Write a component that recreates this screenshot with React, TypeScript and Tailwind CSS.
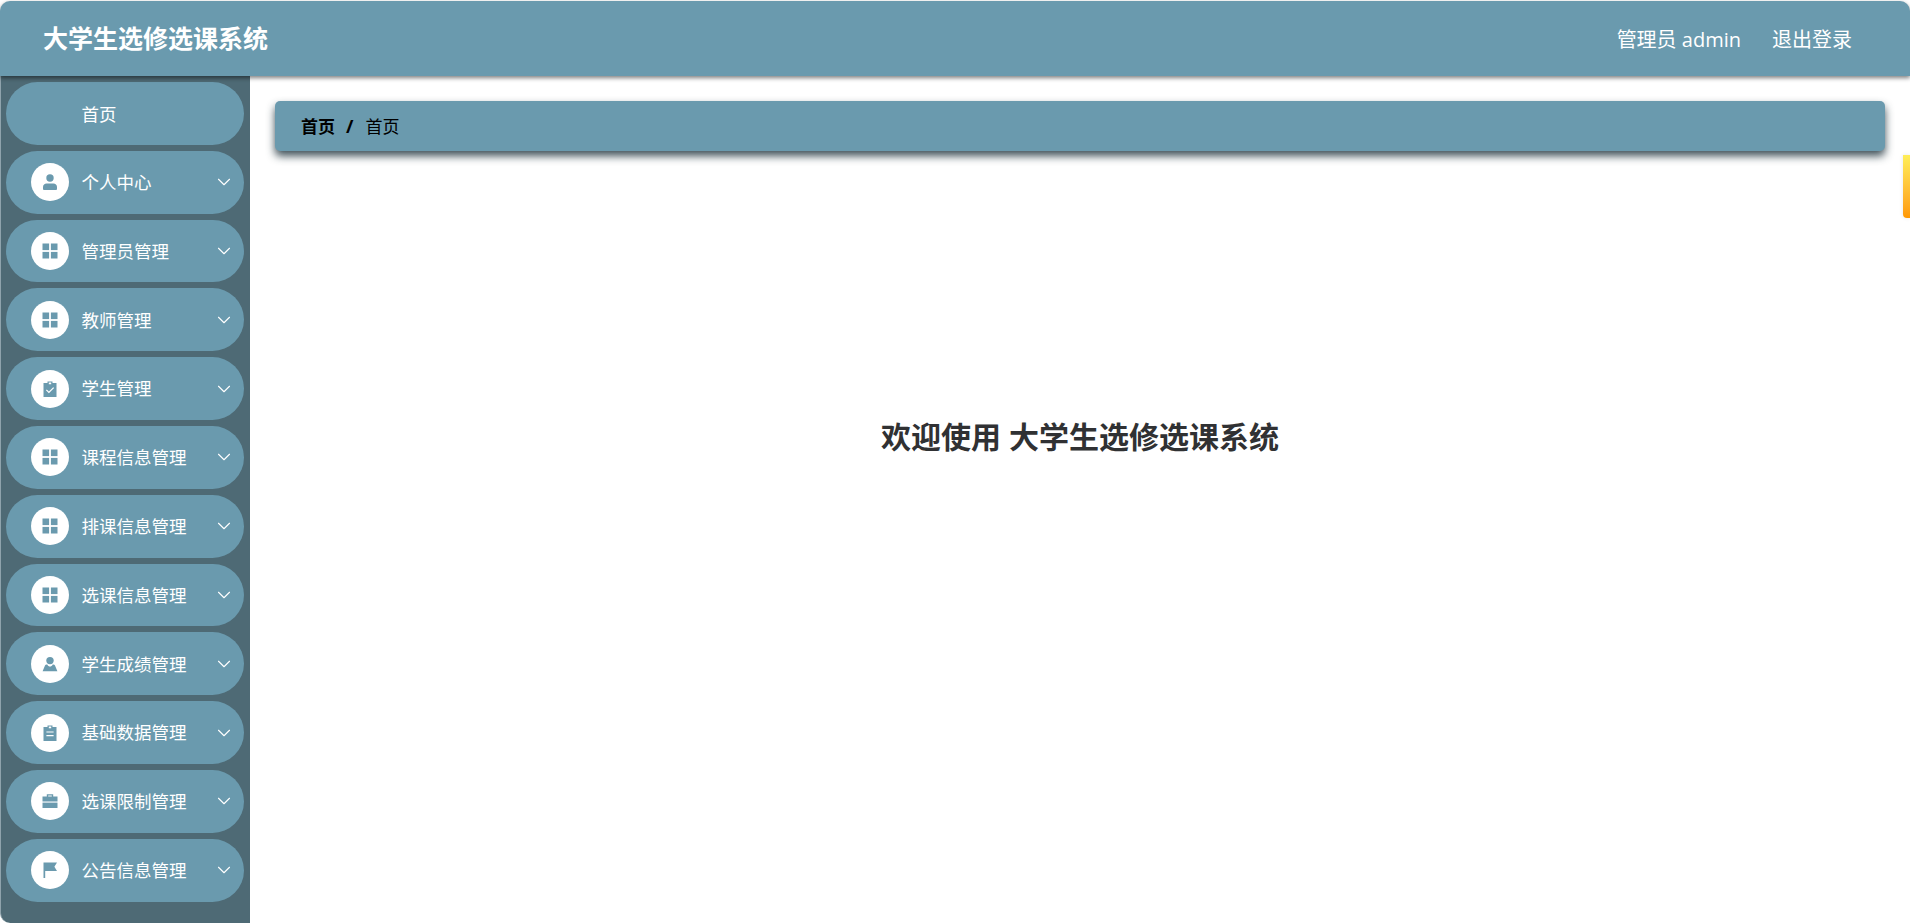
import type { ReactElement } from "react";
import { ChevronDown } from "lucide-react";

function IconUser() {
  return (
    <svg viewBox="0 0 16 16" className="w-4 h-4 fill-[#6a9aae]">
      <circle cx="8" cy="4" r="3.7" />
      <path d="M1 13C1 11 2.6 9.6 4.6 9.6h6.8C13.4 9.6 15 11 15 13v2a1 1 0 0 1-1 1H2a1 1 0 0 1-1-1z" />
    </svg>
  );
}
function IconGrid() {
  return (
    <svg viewBox="0 0 16 16" className="w-4 h-4 fill-[#6a9aae]">
      <rect x="0.5" y="0.5" width="6.6" height="6.6" />
      <rect x="8.9" y="0.5" width="6.6" height="6.6" />
      <rect x="0.5" y="8.9" width="6.6" height="6.6" />
      <rect x="8.9" y="8.9" width="6.6" height="6.6" />
    </svg>
  );
}
function IconCheck() {
  return (
    <svg viewBox="0 0 16 16" className="w-4 h-4 fill-[#6a9aae]">
      <path fillRule="evenodd" d="M5.5 0.5h5v1.5H14.5V16H1.5V2h4zM6.8 1.6v1.6h2.4V1.6zM4.8 8.4l-.9.9 3 3 5.2-5.2-.9-.9-4.3 4.3z" />
    </svg>
  );
}
function IconPerson() {
  return (
    <svg viewBox="0 0 16 16" className="w-4 h-4 fill-[#6a9aae]">
      <circle cx="8" cy="4.6" r="3.7" />
      <path d="M0.6 15.2 3 9.6c.3-.7.9-1 1.6-1h.7c.7 1.4 1.6 2 2.7 2s2-.6 2.7-2h.7c.7 0 1.3.3 1.6 1l2.4 5.6z" />
    </svg>
  );
}
function IconClipboard() {
  return (
    <svg viewBox="0 0 16 16" className="w-4 h-4 fill-[#6a9aae]">
      <path fillRule="evenodd" d="M5.5 0.5h5v1.5H14.5V16H1.5V2h4zM6.8 1.6v1.6h2.4V1.6zM4.4 6.4v1.2h7.2V6.4zM4.4 10v1.2h7.2V10z" />
    </svg>
  );
}
function IconCase() {
  return (
    <svg viewBox="0 0 16 16" className="w-4 h-4 fill-[#6a9aae]">
      <path fillRule="evenodd" d="M4.8 3.5V1.2h6.4v2.3H15.5V8.4H.5V3.5zM6.2 2.4v1.1h3.6V2.4z" />
      <path d="M.5 9.6h15V15H.5z" />
    </svg>
  );
}
function IconFlag() {
  return (
    <svg viewBox="0 0 16 16" className="w-4 h-4 fill-[#6a9aae]">
      <path d="M1.5 0.5h13.5l-2.6 4.2 2.6 4.3H3.2V16H1.5z" />
    </svg>
  );
}

const items: { label: string; Icon: () => ReactElement }[] = [
  { label: "个人中心", Icon: IconUser },
  { label: "管理员管理", Icon: IconGrid },
  { label: "教师管理", Icon: IconGrid },
  { label: "学生管理", Icon: IconCheck },
  { label: "课程信息管理", Icon: IconGrid },
  { label: "排课信息管理", Icon: IconGrid },
  { label: "选课信息管理", Icon: IconGrid },
  { label: "学生成绩管理", Icon: IconPerson },
  { label: "基础数据管理", Icon: IconClipboard },
  { label: "选课限制管理", Icon: IconCase },
  { label: "公告信息管理", Icon: IconFlag },
];

export default function App() {
  return (
    <div className="h-[923px] w-[1910px] overflow-hidden bg-white flex flex-col font-['Open_Sans','Noto_Sans_CJK_SC',sans-serif]">
      <header className="relative z-10 h-[75px] mt-px shrink-0 bg-[#6a9aae] rounded-t-[10px] shadow-[0_2px_4px_rgba(0,0,0,0.5)] flex items-center justify-between pl-[43px] pr-[58px] text-white">
        <div className="text-[25px] font-bold">大学生选修选课系统</div>
        <div className="flex items-center gap-[31px] text-[20px] pt-[2px] pl-[1px]">
          <span>管理员 admin</span>
          <span>退出登录</span>
        </div>
      </header>
      <div className="flex flex-1 min-h-0">
        <aside className="w-[250px] shrink-0 bg-[#4e6a75] border-l border-[#8fa3ac] rounded-bl-[10px] pl-[5px] pr-[6px] pt-[6px] flex flex-col gap-[6px]">
          <div className="h-[62.8px] shrink-0 rounded-[32px] bg-[#6a9aae] flex items-center pl-[75.5px] pt-[1px] text-[17.5px] text-white">首页</div>
          {items.map(({ label, Icon }) => (
            <div key={label} className="h-[62.8px] shrink-0 rounded-[32px] bg-[#6a9aae] flex items-center pl-[25px] pr-[9px] text-white">
              <div className="w-[38px] h-[38px] rounded-full bg-white flex items-center justify-center shrink-0">
                <Icon />
              </div>
              <span className="ml-[12.5px] text-[17.5px] flex-1">{label}</span>
              <ChevronDown size={22} strokeWidth={1.2} />
            </div>
          ))}
        </aside>
        <main className="relative flex-1 min-w-0 px-[25px] pt-[25px]">
          <div className="h-[50px] rounded-[5px] bg-[#6a9aae] shadow-[0_5px_8px_rgba(30,50,60,0.85)] flex items-center pl-[26px] pt-[1px] text-[17px] text-black">
            <b>首页</b>
            <span className="ml-[11px] mr-[12px] font-bold text-[18px]">/</span>
            <span>首页</span>
          </div>
          <h1 className="mt-[263px] text-center text-[30px] font-bold text-[#303133]">欢迎使用 大学生选修选课系统</h1>
          <div className="absolute right-0 top-[79px] w-[7.5px] h-[63px] rounded-bl-[4px] bg-gradient-to-b from-[#ffee58] to-[#ff9800] shadow-[0_0_4px_rgba(0,0,0,0.1)]" />
        </main>
      </div>
    </div>
  );
}
